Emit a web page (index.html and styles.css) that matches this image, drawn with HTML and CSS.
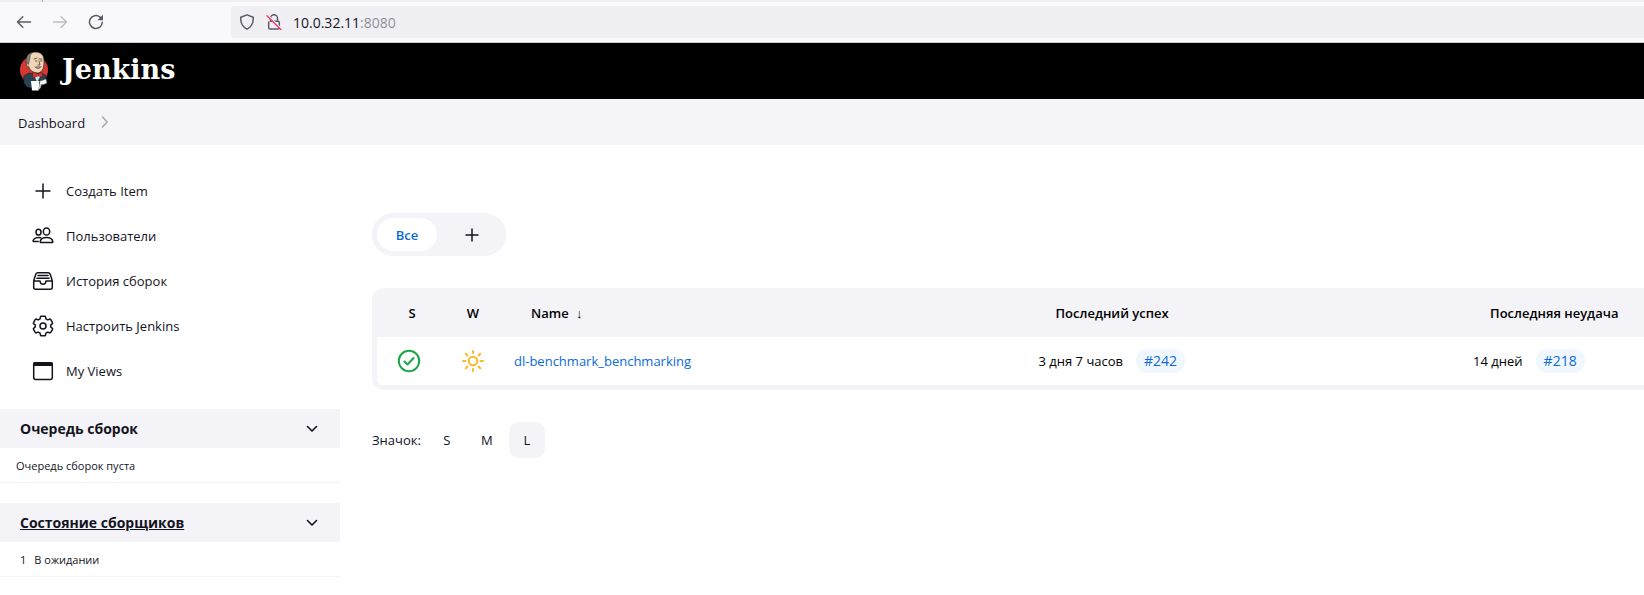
FILE: index.html
```html
<!DOCTYPE html>
<html lang="ru">
<head>
<meta charset="utf-8">
<title>Dashboard [Jenkins]</title>
<link rel="stylesheet" href="styles.css">
</head>
<body>
<div class="browser">
  <div class="tabstrip"></div>
  <div class="toolbar">
    <div class="nav">
      <button class="nav-btn" aria-label="Back"><svg width="16" height="16" viewBox="0 0 16 16"><path d="M14.500 8H1.500M6.800 2.800L1.500 8l5.300 5.200"/></svg></button>
      <button class="nav-btn dim" aria-label="Forward"><svg width="16" height="16" viewBox="0 0 16 16"><path d="M1.500 8h13M9.200 2.800L14.500 8l-5.300 5.200"/></svg></button>
      <button class="nav-btn" aria-label="Reload"><svg width="16" height="16" viewBox="0 0 16 16"><path d="M14.300 8.200a6.400 6.400 0 1 1-2.300-5.100l1.500 1.500"/><path class="fill" d="M15 .8v5.500H9.500z"/></svg></button>
    </div>
    <div class="urlbar">
      <svg width="16" height="16" viewBox="0 0 16 16"><path d="M8 .9l6.200 2.300c.5 5.500-1.600 9.600-6.200 12-4.600-2.400-6.700-6.500-6.200-12z"/></svg>
      <svg width="16" height="16" viewBox="0 0 16 16"><path d="M2.700 8v5.700c0 .8.500 1.300 1.300 1.300h8c.8 0 1.300-.5 1.300-1.300V8.600c0-.8-.5-1.300-1.300-1.300H4.500M4.500 7V4.200a3.500 3.500 0 0 1 7 0V7"/><path class="slash-gap" d="M1.500.8l14 14"/><path class="slash" d="M1 1.700l14 14"/></svg>
      <span class="url">10.0.32.11<span class="port">:8080</span></span>
    </div>
  </div>
</div>

<header class="header">
  <a class="brand" href="#">
    <svg width="30" height="40" viewBox="0 0 30 40">
      <circle cx="15" cy="19" r="14" fill="#d33833"/>
      <path d="M5 25l5-3 5 1 6-2 5 3 2 5-3 4-4 3-7 1-6-1-3-4z" fill="#2a4252" stroke="#18242c" stroke-width=".7"/>
      <path d="M8 8c0-5 4-7 8-7 6 0 9 3 9 9 0 6-1 11-6 12-6 0-9-4-10-8z" fill="#f0d6b7" stroke="#1d1919" stroke-width=".6"/>
      <path d="M7 12c0-7 2-10 8-11-3 1-4 3-4 5l-1 5-1 4z" fill="#8b8580" stroke="#222" stroke-width=".5"/>
      <path d="M9 12c-2 0-2 4 1 4" fill="#f0d6b7" stroke="#1d1919" stroke-width=".6"/>
      <path d="M15 8l3-1M20 8h3M16.500 10H18M21.500 10H23M20 10l1 4h-2M16 16c2 2 5 2 6-.5M17 16h4" fill="none" stroke="#4b3b35" stroke-width=".8"/>
      <path d="M15 24l3 7 4-7z" fill="#dce3e8"/>
      <path d="M14 21l5 2 4-2 .6 5-4.600-1-5 2z" fill="#d33833" stroke="#641b19" stroke-width=".5"/>
      <path d="M12 30h8.500l-1 9.500H13z" fill="#fff"/>
      <path d="M21 30l6-2 1 4-3 1.500h-4z" fill="#eef0f1" stroke="#444" stroke-width=".4"/>
      <path d="M20.500 33h2l-1 4-2 2z" fill="#c9ced1"/>
    </svg>
    <span class="brand-name">Jenkins</span>
  </a>
</header>

<nav class="breadcrumbs">
  <a href="#">Dashboard</a>
  <svg width="8" height="12" viewBox="0 0 8 12"><path d="M1.500 1L6.200 6l-4.700 5"/></svg>
</nav>

<div class="page">
  <aside class="side">
    <nav class="tasks">
      <a class="task" href="#"><svg width="22" height="22" viewBox="0 0 22 22"><path d="M11 4v14M4 11h14"/></svg>Создать Item</a>
      <a class="task" href="#"><svg width="22" height="22" viewBox="0 0 22 22"><ellipse cx="14.500" cy="6.500" rx="3.200" ry="3.600"/><ellipse cx="6.500" cy="7.200" rx="2.500" ry="2.900"/><path d="M14.500 12.500c-3.300 0-5.800 1.600-6.300 4-.1.600.3 1 .8 1h11c.6 0 .9-.4.800-1-.5-2.400-3-4-6.300-4z"/><path d="M8.800 12.700c-3.500-.9-7 .4-7.700 2.900-.1.500.2.900.7.900h4.400"/></svg>Пользователи</a>
      <a class="task" href="#"><svg width="22" height="22" viewBox="0 0 22 22"><path d="M1.700 10.800v6.400c0 1.200.8 2 2 2h14.600c1.200 0 2-.8 2-2v-6.400L18.200 4.200c-.4-1.100-1-1.500-2-1.500H5.800c-1 0-1.600.4-2 1.500zM1.700 11H8c.2 2 1.300 3.200 3 3.200s2.800-1.200 3-3.200h6.300M6 5.500h10M5 8.200h12"/></svg>История сборок</a>
      <a class="task" href="#"><svg width="22" height="22" viewBox="0 0 22 22"><circle cx="11" cy="11" r="3"/><path d="M9.200 1.200h3.600c.5 0 .7.300.8.800l.3 1.800 1.900 1.100 1.700-.7c.6-.2 1 0 1.300.4l1.700 3c.3.500.1.900-.3 1.200l-1.400 1.100v2.200l1.400 1.100c.4.300.6.700.3 1.200l-1.700 3c-.3.400-.7.600-1.300.4l-1.700-.7-1.900 1.100-.3 1.800c-.1.500-.3.800-.8.800H9.200c-.5 0-.7-.3-.8-.8l-.3-1.800-1.900-1.100-1.700.7c-.6.200-1 0-1.300-.4l-1.700-3c-.3-.5-.1-.9.300-1.200l1.400-1.100V9.900L1.800 8.800c-.4-.3-.6-.7-.3-1.200l1.700-3c.3-.4.700-.6 1.300-.4l1.700.7 1.900-1.100.3-1.800c.1-.5.300-.8.800-.8z"/></svg>Настроить Jenkins</a>
      <a class="task" href="#"><svg width="22" height="22" viewBox="0 0 22 22"><rect x="1.700" y="2.700" width="18.600" height="16.800" rx="2"/><path class="solid" d="M1 6V4c0-1.200.9-2 2-2h16c1.100 0 2 .8 2 2v2z"/></svg>My Views</a>
    </nav>
    <section class="pane">
      <div class="pane-head"><h2>Очередь сборок</h2><button class="fold" aria-label="Свернуть очередь"><svg width="12" height="8" viewBox="0 0 12 8"><path d="M1.500 1.500L6 6l4.500-4.500"/></svg></button></div>
      <div class="pane-body">Очередь сборок пуста</div>
    </section>
    <section class="pane">
      <div class="pane-head"><h2><a href="#">Состояние сборщиков</a></h2><button class="fold" aria-label="Свернуть сборщики"><svg width="12" height="8" viewBox="0 0 12 8"><path d="M1.500 1.500L6 6l4.500-4.500"/></svg></button></div>
      <div class="pane-body executor"><span>1</span><span>В ожидании</span></div>
    </section>
  </aside>

  <main class="main">
    <div class="tabs">
      <a class="tab active" href="#">Все</a>
      <a class="tab" href="#" aria-label="New View"><svg width="14" height="14" viewBox="0 0 14 14"><path d="M7 1v12M1 7h12"/></svg></a>
    </div>
    <div class="table-wrap">
      <table class="jobs">
        <colgroup><col class="c-icon"><col class="c-icon"><col><col class="c-success"><col class="c-failure"></colgroup>
        <thead>
          <tr><th class="status-head">S</th><th class="weather">W</th><th>Name <span class="arrow">↓</span></th><th>Последний успех</th><th>Последняя неудача</th></tr>
        </thead>
        <tbody>
          <tr>
            <td class="status"><svg width="24" height="24" viewBox="0 0 24 24"><circle cx="12" cy="12" r="10.200"/><path d="M7.500 12.500l3 3 6-6.500"/></svg></td>
            <td class="weather sunny"><svg width="24" height="24" viewBox="0 0 24 24"><circle cx="12" cy="12" r="4.200"/><path d="M12 2v2M12 20v2M2 12h2.500M19.500 12H22M4.800 4.800l1.700 1.700M17.500 17.500l1.700 1.700M4.800 19.200l1.700-1.700M17.500 6.500l1.700-1.700"/></svg></td>
            <td><a class="job" href="#">dl-benchmark_benchmarking</a></td>
            <td><div class="build">3 дня 7 часов <a class="badge" href="#">#242</a></div></td>
            <td><div class="build">14 дней <a class="badge" href="#">#218</a></div></td>
          </tr>
        </tbody>
      </table>
    </div>
    <div class="sizes">
      <span class="sizes-label">Значок:</span>
      <a class="size" href="#">S</a>
      <a class="size" href="#">M</a>
      <span class="size current">L</span>
    </div>
  </main>
</div>
</body>
</html>
```
FILE: styles.css
```css
* { box-sizing: border-box; }
body {
  margin: 0;
  background: #fff;
  color: #14141f;
  font-family: "Open Sans", "Noto Sans", sans-serif;
  font-size: 13px;
  line-height: 20px;
  overflow-x: hidden;
}
a { color: inherit; text-decoration: none; }
button { border: 0; padding: 0; background: none; display: flex; }
svg { display: block; flex: none; fill: none; stroke: currentColor; stroke-linecap: round; stroke-linejoin: round; }

/* Browser chrome */
.tabstrip { width: 43px; height: 2px; border-right: 1px solid #aaa; background: #f0f0f2; }
.browser { background: #f0f0f2; }
.toolbar {
  display: flex;
  align-items: center;
  height: 41px;
  padding-left: 16px;
  background: #f9f9fb;
  border-bottom: 1px solid #ccc;
}
.nav { display: flex; gap: 20px; width: 215px; }
.nav-btn { color: #5b5b66; }
.nav-btn svg { stroke-width: 1.5; }
.nav-btn.dim { color: #bdbdc2; }
.nav-btn .fill { fill: currentColor; stroke: none; }
.urlbar {
  flex: 1;
  display: flex;
  align-items: center;
  gap: 11px;
  height: 32px;
  padding-left: 8px;
  border-radius: 4px 0 0 4px;
  background: #f0f0f4;
  color: #5b5b66;
}
.urlbar svg { stroke-width: 1.5; }
.urlbar .slash-gap { stroke: #f0f0f4; }
.urlbar .slash { stroke: #ff3b6b; }
.url { padding-top: 2px; font-size: 14px; color: #15141a; }
.port { color: #8f8f98; }

/* Jenkins header */
.header { display: flex; align-items: center; height: 56px; padding-left: 19px; background: #000; }
.brand { display: flex; align-items: center; gap: 13px; color: #fff; }
.brand svg { stroke: none; }
.brand-name { padding-bottom: 2px; font: bold 27px/38px "DejaVu Serif", serif; }

.breadcrumbs {
  display: flex;
  align-items: center;
  gap: 16px;
  height: 46px;
  padding: 0 18px;
  background: #f5f5f8;
}
.breadcrumbs a { padding-top: 2px; }
.breadcrumbs svg { color: #a9a9b5; stroke-width: 1.6; }

.page { display: flex; align-items: flex-start; }

/* Sidebar */
.side { width: 340px; flex: none; padding-top: 23px; }
.tasks { padding: 0 32px; margin-bottom: 16px; }
.task { display: flex; align-items: center; gap: 12px; height: 45px; }
.task svg { stroke-width: 1.5; }
.task .solid { fill: currentColor; stroke: none; }
.pane { margin-bottom: 20px; }
.pane-head {
  display: flex;
  align-items: center;
  justify-content: space-between;
  height: 39px;
  padding: 0 22px 0 20px;
  background: #f3f3f8;
}
.pane-head h2 { margin: 0; font-size: 14px; font-weight: 700; }
.pane-head a { text-decoration: underline; }
.fold { color: #14141f; }
.fold svg { stroke-width: 1.6; }
.pane-body { height: 35px; padding: 8px 16px; border-bottom: 1px solid #f3f3f8; font-size: 11px; }
.executor { display: flex; gap: 8px; padding-left: 20px; }

/* Main panel */
.main { flex: 1; min-width: 0; padding: 68px 0 0 32px; }
.tabs { display: flex; width: max-content; padding: 5px; border-radius: 22px; background: #f3f3f8; }
.tab {
  display: flex;
  align-items: center;
  justify-content: center;
  width: 60px;
  height: 33px;
  border-radius: 17px;
  font-weight: 600;
}
.tab + .tab { width: 64px; padding-left: 6px; }
.tab.active { background: #fff; color: #0b6ad9; }
.tab svg { stroke-width: 1.5; }

.table-wrap {
  margin-top: 32px;
  padding: 0 0 5px 5px;
  border-radius: 12px 0 0 12px;
  background: #f3f3f8;
}
.jobs { width: 100%; table-layout: fixed; border-collapse: separate; border-spacing: 0; color: #000; }
.c-icon { width: 64px; }
.c-success { width: 34.3%; }
.c-failure { width: 14.2%; }
.jobs th { height: 49px; padding: 0 0 0 26px; text-align: left; font-weight: 600; white-space: nowrap; }
.jobs td { height: 48px; padding: 0 0 0 9px; background: #fff; white-space: nowrap; }
.jobs td:first-child { border-bottom-left-radius: 6px; }
.jobs .status-head { padding: 0 0 0 6px; text-align: center; }
.jobs .weather { padding: 0; text-align: center; }
.jobs .status { padding: 0; color: #1ea64b; }
.jobs .sunny { color: #fcb72b; }
.jobs td svg { margin: 0 auto; stroke-width: 2; }
.arrow { margin-left: 4px; }
.job { color: #0b6ad9; }
.build { display: flex; align-items: center; gap: 13px; }
.badge { padding: 2px 8px; border-radius: 12px; background: #f1f7fe; color: #0b6ad9; font-size: 14px; }

.sizes { display: flex; align-items: center; gap: 4px; margin-top: 32px; }
.sizes-label { margin-right: 4px; }
.size {
  display: flex;
  align-items: center;
  justify-content: center;
  width: 36px;
  height: 36px;
  border-radius: 10px;
}
.size.current { background: #f3f3f8; }
```
